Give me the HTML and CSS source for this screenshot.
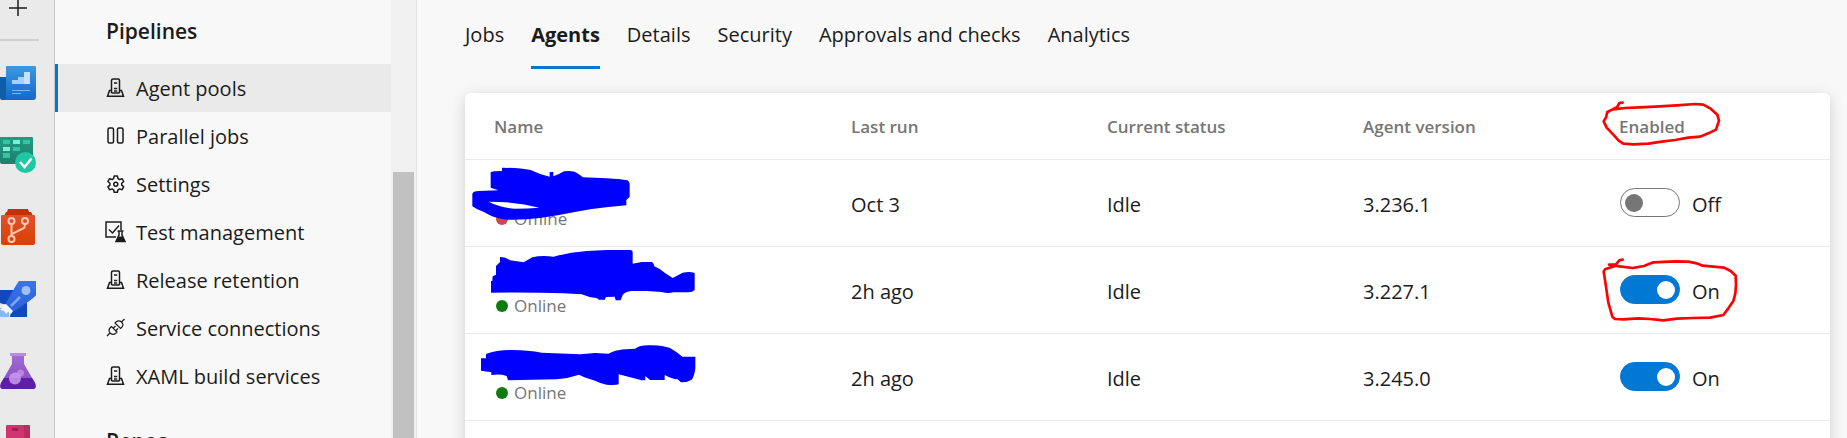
FILE: index.html
```html
<!DOCTYPE html>
<html lang="en">
<head>
  <meta charset="UTF-8">
  <meta name="viewport" content="width=device-width, initial-scale=1.0">
  <title>Agent pools - Agents</title>
  <link rel="stylesheet" href="styles.css">
</head>
<body>
<!-- shared outline icons -->
<svg class="defs" width="0" height="0" aria-hidden="true">
  <symbol id="icon-server" viewBox="0 0 20 20">
    <path d="M5.500 15V2.500Q5.500 1 7 1h5q1.500 0 1.500 1.500V15M5.500 12.500H3.500L1.500 18.200h16L15.500 12.500H13.500M5.500 15h8M8 5h3.200M8 10.500h3.200M8 13h3.200" fill="none" stroke="currentColor" stroke-width="1.500"/>
  </symbol>
</svg>

<div class="app">
  <nav class="rail" aria-label="Services">
    <button class="rail-add" type="button" aria-label="Create new">
      <svg width="18" height="16" viewBox="0 0 18 16"><path d="M9 0v16M0 8h18" stroke="#1b1b1b" stroke-width="1.500"/></svg>
    </button>
    <div class="rail-line"></div>
    <div class="rail-icons">
      <a href="#overview" aria-label="Overview">
        <svg width="36" height="36" viewBox="0 0 36 36">
          <defs><linearGradient id="g1" x1="0" y1="0" x2="0" y2="1"><stop offset="0" stop-color="#3e98e0"/><stop offset="1" stop-color="#1468cc"/></linearGradient></defs>
          <path d="M0 12h8v23H2q-2 0-2-2z" fill="#0f5fa8"/>
          <path d="M7 1h28q1 0 1 1v30q0 3-3 3H4q2-1 2-3V2q0-1 1-1z" fill="url(#g1)"/>
          <path d="M12 15h6v-3h6V7h6v12H12z" fill="#a5d2fb"/>
          <path d="M24 7h6v12h-6z" fill="#c3e2ff"/>
          <path d="M12 25.500h18M12 28.500h9" stroke="#79b8f4"/>
        </svg>
      </a>
      <a href="#boards" aria-label="Boards">
        <svg width="36" height="36" viewBox="0 0 36 36">
          <defs><linearGradient id="g2" x1="0" y1="0" x2="0" y2="1"><stop offset="0" stop-color="#249a83"/><stop offset="1" stop-color="#1f7e6d"/></linearGradient></defs>
          <path d="M0 0h32q1 0 1 1v26H2q-2 0-2-2z" fill="url(#g2)"/>
          <path d="M3 3h7v4H3zM23 3h7v4h-7zM13 10h7v4h-7zM3 16h7v5H3z" fill="#35c4a4"/>
          <path d="M13 3h7v4h-7zM3 10h7v4H3z" fill="#7cf0d3"/>
          <circle cx="25.500" cy="25.500" r="10.500" fill="#1dc8a3"/>
          <path d="M20 25l4.500 5 7-8.500" fill="none" stroke="#fff" stroke-width="2.500"/>
        </svg>
      </a>
      <a href="#repos" aria-label="Repos">
        <svg width="36" height="36" viewBox="0 0 36 36">
          <defs><linearGradient id="g3" x1="0" y1="0" x2="0" y2="1"><stop offset="0" stop-color="#dc5230"/><stop offset="1" stop-color="#dc3f00"/></linearGradient></defs>
          <path d="M8 0h20l1 3h2l2 4H4l2-4h1z" fill="#c23200"/>
          <path d="M2 6h32q1 0 1 1v27q0 2-2 2H3q-2 0-2-2V7q0-1 1-1z" fill="url(#g3)"/>
          <g fill="none" stroke="#ffc9b4" stroke-width="2">
            <circle cx="11.500" cy="12" r="3"/><circle cx="25" cy="12" r="3"/><circle cx="11.500" cy="30" r="3"/>
            <path d="M11.500 15v12M12 25l12-6q1-1 1-4"/>
          </g>
        </svg>
      </a>
      <a href="#pipelines" aria-label="Pipelines">
        <svg width="36" height="36" viewBox="0 0 36 36">
          <defs><linearGradient id="g4" x1="0" y1="0" x2="0" y2="1"><stop offset="0" stop-color="#3a74e6"/><stop offset="1" stop-color="#2a60d8"/></linearGradient></defs>
          <path d="M0 9h15v18L0 22zM10 36l2-14 15-3v17z" fill="#1149bb"/>
          <path d="M19 0h17v14Q36 16 13 31L5 24Q17 2 19 0z" fill="url(#g4)"/>
          <circle cx="26" cy="9.500" r="4.500" fill="#a0bff8"/>
          <path d="M11 25l9-9" stroke="#7fa6f3" stroke-width="2.500"/>
          <path d="M0 27h9v9H0z" fill="#8db4f5"/>
          <path d="M3 24l3-1 7 7-2 3-3-2-2 2-2-3-4-1 2-2z" fill="#f3f6fc"/>
        </svg>
      </a>
      <a href="#testplans" aria-label="Test Plans">
        <svg width="36" height="36" viewBox="0 0 36 36">
          <defs><linearGradient id="g5" x1="0" y1="0" x2="0" y2="1"><stop offset="0" stop-color="#a06bd2"/><stop offset="1" stop-color="#8546c4"/></linearGradient></defs>
          <path d="M12 2h12v9l11 19q2 6-2 6H3q-4 0-2-6l11-19z" fill="url(#g5)"/>
          <path d="M4 25h28l3 5q2 6-2 6H3q-4 0-2-6z" fill="#5f1ea8"/>
          <path d="M10 0h16v3H10z" fill="#b98ce0"/>
          <circle cx="15" cy="25.500" r="6" fill="#c99aec" opacity=".85"/>
          <circle cx="20.500" cy="20" r="3.500" fill="#c99aec" opacity=".7"/>
        </svg>
      </a>
      <a href="#artifacts" aria-label="Artifacts">
        <svg width="36" height="36" viewBox="0 0 36 36">
          <path d="M7 0h17v36H6V1q0-1 1-1z" fill="#d1336f"/>
          <path d="M24 0h5q1 0 1 1v35h-6z" fill="#bc2a62"/>
          <path d="M12 3h6v3h-6z" fill="#a51c4f"/>
        </svg>
      </a>
    </div>
  </nav>

  <aside class="sidebar">
    <div class="sidebar-content">
      <h2>Pipelines</h2>
      <ul class="menu">
        <li><a class="selected" href="#agentpools"><svg class="icon"><use href="#icon-server"/></svg>Agent pools</a></li>
        <li><a href="#paralleljobs"><svg class="icon" viewBox="0 0 20 20"><g fill="none" stroke="currentColor" stroke-width="1.500"><rect x="2" y="2" width="5.500" height="15" rx="1.500"/><rect x="11.500" y="2" width="5.500" height="15" rx="1.500"/></g></svg>Parallel jobs</a></li>
        <li><a href="#settings"><svg class="icon" viewBox="0 0 20 20"><g fill="none" stroke="currentColor" stroke-width="1.500" stroke-linejoin="round"><path d="M8.200 2h3.200l.6 2.600 1.500.9 2.600-.8 1.600 2.800-2 1.800v1.800l2 1.800-1.600 2.800-2.600-.8-1.500.9-.6 2.400H8.200l-.6-2.400-1.500-.9-2.600.8-1.600-2.800 2-1.800V9.300l-2-1.800 1.600-2.800 2.600.8 1.500-.9z"/><circle cx="9.800" cy="10.200" r="2"/></g></svg>Settings</a></li>
        <li><a href="#testmanagement"><svg class="icon icon-large" viewBox="0 0 22 22"><path d="M11 16H1V1h15v8M4 8.500l3.500 3.500L14 4.500" fill="none" stroke="currentColor" stroke-width="1.500"/><path d="M12.500 10h6M14 10v4l-3 6.500h9L17 14v-4" fill="none" stroke="currentColor" stroke-width="1.500"/><path d="M13.500 15.500h4l3 5.500h-10z" fill="currentColor"/></svg>Test management</a></li>
        <li><a href="#retention"><svg class="icon"><use href="#icon-server"/></svg>Release retention</a></li>
        <li><a href="#connections"><svg class="icon" viewBox="0 0 20 20"><path d="M1 18l3-3M15.500 4L18.500 1M4 15q-2-3 0-5l1.500-1.500 5.500 5.500L9.500 15.500q-2.500 2-5.500-.5zM7.500 10l2-2M10 12.500l2-2M9 5l5.500 5.500L16 9q2-2.500-.5-5-2.500-2-5-.5z" fill="none" stroke="currentColor" stroke-width="1.200"/></svg>Service connections</a></li>
        <li><a href="#xaml"><svg class="icon"><use href="#icon-server"/></svg>XAML build services</a></li>
      </ul>
      <h2>Repos</h2>
    </div>
    <div class="scrollbar"><div class="thumb"></div></div>
  </aside>

  <main class="main">
    <nav class="tabs" aria-label="Pool">
      <a href="#jobs">Jobs</a>
      <a class="active" href="#agents">Agents</a>
      <a href="#details">Details</a>
      <a href="#security">Security</a>
      <a href="#approvals">Approvals and checks</a>
      <a href="#analytics">Analytics</a>
    </nav>

    <div class="card">
      <table class="agents">
        <thead>
          <tr>
            <th class="col-name">Name</th>
            <th class="col">Last run</th>
            <th class="col">Current status</th>
            <th class="col">Agent version</th>
            <th>Enabled
              <svg class="loop" width="140" height="65" viewBox="63 39 420 195"><path d="M128 68L118 69 111 82 98 88 82 96 78 112 71 124 80 143 102 166 116 182 130 191 160 193 205 191 245 185 285 180 325 173 360 170 385 160 408 149 417 122 412 104 392 86 370 74 345 72 290 76 240 79 180 82 135 84 100 88"/></svg>
            </th>
          </tr>
        </thead>
        <tbody>
          <tr>
            <td class="name"><div class="status"><span class="dot offline"></span>Offline</div>
              <svg class="scribble" width="250" height="87" viewBox="15 27 750 261"><path fill-rule="evenodd" d="M126 50Q180 51 212 57Q240 71 269 77V63H280V76Q298 70 312 61Q326 58 344 62Q358 69 369 79L440 82Q480 84 503 88Q509 92 509 100V137L499 147V163L445 168Q390 173 340 184Q290 195 245 200Q190 208 140 206Q110 202 94 195L70 182Q50 176 37 166V128Q40 121 55 120L115 118L92 110V64Q96 60 126 60ZM86 152Q120 170 165 173Q205 173 238 170Q170 152 86 152Z"/></svg>
            </td>
            <td>Oct 3</td>
            <td>Idle</td>
            <td>3.236.1</td>
            <td><label class="toggle"><input type="checkbox">Off</label></td>
          </tr>
          <tr>
            <td class="name"><div class="status"><span class="dot"></span>Online</div>
              <svg class="scribble" width="250" height="87" viewBox="15 21 750 261"><path d="M120 51Q135 50 150 61L191 67L217 52Q245 45 281 50Q330 36 380 33L440 30H512Q518 31 518 37V71L545 66H576Q582 70 583 79Q600 86 615 99L638 114L668 98Q690 93 704 99V150Q698 157 685 157H640Q625 162 605 156L560 153H515Q495 155 488 165L482 181H467L464 170L438 171L434 179H416L412 175Q385 172 365 163L310 160Q230 157 93 158V123H97L98 109L108 104V78L120 66Z"/></svg>
            </td>
            <td>2h ago</td>
            <td>Idle</td>
            <td>3.227.1</td>
            <td><label class="toggle"><input type="checkbox" checked>On</label>
              <svg class="loop" width="140" height="87" viewBox="63 501 420 261"><path d="M128 539L118 541 108 553 87 554 118 559 158 564 192 558 220 547 285 544 325 545 350 550 368 557 432 563 452 573 467 587 468 615 466 640 460 663 445 685 430 705 390 713 340 714 290 716 250 721 210 717 175 715 130 718 105 717 97 710 85 668 78 620 71 575 75 568 105 558"/></svg>
            </td>
          </tr>
          <tr>
            <td class="name"><div class="status"><span class="dot"></span>Online</div>
              <svg class="scribble" width="250" height="87" viewBox="15 282 750 261"><path d="M78 342Q110 330 155 330Q205 330 245 338L360 343L405 339L446 341Q465 327 525 326Q540 314 575 316Q610 317 630 324Q648 334 667 350H706V385Q703 410 695 419Q680 428 663 427L653 418Q635 417 614 405V420H570L556 408V421H545L476 403V432Q470 436 440 434Q425 432 405 422L373 412L357 404Q325 415 290 418L144 421L140 408Q120 401 94 405V397L63 392V355H78Z"/></svg>
            </td>
            <td>2h ago</td>
            <td>Idle</td>
            <td>3.245.0</td>
            <td><label class="toggle"><input type="checkbox" checked>On</label></td>
          </tr>
        </tbody>
      </table>
    </div>
  </main>
</div>
</body>
</html>
```
FILE: styles.css
```css
* {
  box-sizing: border-box;
}
body {
  margin: 0;
  font-family: "Open Sans", "Noto Sans", sans-serif;
  font-size: 20px;
  line-height: 28px;
  color: #1b1b1b;
  background-color: #f8f8f8;
}
a {
  color: inherit;
  text-decoration: none;
}
.defs {
  position: absolute;
}
.app {
  display: flex;
  height: 100vh;
  overflow: hidden;
}

/* service rail */
.rail {
  flex: none;
  width: 55px;
  background-color: #eaeaea;
  border-right: 1px solid #c8c8c8;
}
.rail-add {
  display: block;
  height: 39px;
  padding: 0 0 23px 9px;
  border: none;
  background: none;
}
.rail-add svg {
  display: block;
}
.rail-line {
  width: 39px;
  height: 2px;
  background-color: #d0d0d0;
}
.rail-icons {
  display: flex;
  flex-direction: column;
  gap: 36px;
  padding-top: 24px;
}
.rail-icons a,
.rail-icons svg {
  display: block;
  height: 36px;
}

/* settings menu */
.sidebar {
  display: flex;
  flex: none;
  width: 362px;
  border-right: 1px solid #e4e4e4;
}
.sidebar-content {
  flex: 1;
}
.sidebar h2 {
  margin: 0;
  padding: 17px 51px 19px;
  font-size: 21px;
  line-height: 28px;
  font-weight: 600;
}
.menu {
  margin: 0 0 10px;
  padding: 0;
  list-style: none;
}
.menu a {
  display: flex;
  align-items: center;
  gap: 10px;
  height: 48px;
  padding: 2px 0 0 47px;
  border-left: 3px solid transparent;
}
.menu .selected {
  background-color: #eaeaea;
  border-left-color: #0078d4;
}
.icon {
  width: 20px;
  height: 20px;
  margin: 0 0 2px 1px;
}
.icon-large {
  width: 22px;
  height: 22px;
  margin: 0 -1px 2px 0;
}
.scrollbar {
  width: 25px;
  padding: 172px 2px 0;
  background-color: #f0f0f0;
}
.thumb {
  height: 100%;
  background-color: #c1c1c1;
}

/* tabs */
.main {
  flex: 1;
  padding: 0 17px 0 48px;
}
.tabs {
  display: flex;
  gap: 27px;
  margin-bottom: 24px;
}
.tabs a {
  padding: 21px 0 17px;
  border-bottom: 3px solid transparent;
}
.tabs .active {
  font-weight: 700;
  border-bottom-color: #0078d4;
}

/* agents table */
.card {
  height: 100%;
  background-color: #fff;
  border-radius: 6px;
  box-shadow: 0 3px 15px rgba(0,0,0,0.16);
}
.agents {
  width: 100%;
  table-layout: fixed;
  border-spacing: 0;
}
.agents th,
.agents td {
  position: relative;
  padding: 0;
  text-align: left;
  border-bottom: 1px solid #eaeaea;
}
.agents th {
  height: 67px;
  padding-top: 1px;
  font-size: 17px;
  font-weight: 600;
  color: #767676;
}
.agents td {
  height: 87px;
  padding-top: 3px;
}
.agents .col-name {
  width: 386px;
  padding-left: 29px;
}
.agents .col {
  width: 256px;
}
.agents .name {
  padding: 31px 0 0 31px;
}
.status {
  display: flex;
  align-items: center;
  gap: 6px;
  font-size: 17px;
  line-height: 28px;
  color: #767676;
}
.dot {
  width: 12px;
  height: 12px;
  border-radius: 50%;
  background-color: #107c10;
}
.dot.offline {
  background-color: #cd4a45;
}
.toggle {
  display: flex;
  align-items: center;
  gap: 12px;
}
.toggle input {
  appearance: none;
  display: flex;
  align-items: center;
  width: 60px;
  height: 29px;
  margin: 0 0 4px 1px;
  padding: 0 4px;
  border: 1px solid #767676;
  border-radius: 15px;
}
.toggle input::before {
  content: "";
  width: 18px;
  height: 18px;
  border-radius: 50%;
  background-color: #767676;
}
.toggle input:checked {
  justify-content: flex-end;
  background-color: #0078d4;
  border-color: #0078d4;
}
.toggle input:checked::before {
  background-color: #fff;
}

/* hand-drawn marks over the cells */
.scribble,
.loop {
  position: absolute;
  top: 0;
  left: 0;
  pointer-events: none;
}
.scribble {
  fill: #00f;
}
.loop {
  left: -18px;
  fill: none;
  stroke: #f00;
  stroke-width: 8;
  stroke-linejoin: round;
  stroke-linecap: round;
}
```
